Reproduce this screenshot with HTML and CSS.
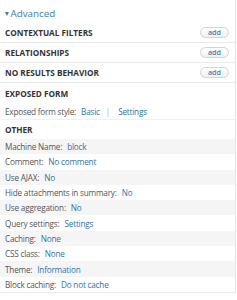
FILE: index.html
```html
<!DOCTYPE html>
<html>
<head>
<meta charset="utf-8">
<link rel="stylesheet" href="styles.css">
</head>
<body>
<div class="panel">
  <div class="toggle"><span class="tri"></span>Advanced</div>
  <div class="head bordered"><span>CONTEXTUAL FILTERS</span><span class="add">add</span></div>
  <div class="head bordered"><span>RELATIONSHIPS</span><span class="add">add</span></div>
  <div class="head bordered"><span>NO RESULTS BEHAVIOR</span><span class="add">add</span></div>
  <div class="head"><span>EXPOSED FORM</span></div>
  <div class="row plain">Exposed form style:<a class="lnk">Basic</a><span class="sep">|</span><a class="lnk">Settings</a></div>
  <div class="head other"><span>OTHER</span></div>
  <ul class="list">
    <li>Machine Name:<a class="lnk">block</a></li>
    <li>Comment:<a class="lnk">No comment</a></li>
    <li>Use AJAX:<a class="lnk">No</a></li>
    <li>Hide attachments in summary:<a class="lnk">No</a></li>
    <li>Use aggregation:<a class="lnk">No</a></li>
    <li>Query settings:<a class="lnk">Settings</a></li>
    <li>Caching:<a class="lnk">None</a></li>
    <li>CSS class:<a class="lnk">None</a></li>
    <li>Theme:<a class="lnk">Information</a></li>
    <li>Block caching:<a class="lnk">Do not cache</a></li>
  </ul>
</div>
</body>
</html>
```
FILE: styles.css
```css
html, body {
  margin: 0;
  padding: 0;
  background: #ffffff;
}
body {
  font-family: "Open Sans", "DejaVu Sans", sans-serif;
  color: #555;
}
.panel {
  width: 235px;
  border-right: 1px solid #e6e6e6;
}
.toggle {
  height: 23px;
  display: flex;
  align-items: center;
  padding-left: 5px;
  padding-top: 4px;
  box-sizing: border-box;
  font-size: 9.8px;
  color: #3a80b4;
}
.tri {
  width: 0;
  height: 0;
  border-left: 2.5px solid transparent;
  border-right: 2.5px solid transparent;
  border-top: 4px solid #3a80b4;
  margin-right: 1.5px;
}
.head {
  height: 20px;
  box-sizing: border-box;
  display: flex;
  align-items: center;
  justify-content: space-between;
  padding: 0 6px 0 5px;
  font-size: 8.2px;
  font-weight: 700;
  color: #333;
}
.head.bordered {
  border-bottom: 1px solid #ebebeb;
}
.head.other {
  height: 19px;
}
.add {
  width: 27px;
  height: 9px;
  border: 1px solid #d4d4d4;
  border-radius: 6px;
  background: linear-gradient(#ffffff, #f1f1f1);
  color: #4a7fa8;
  font-size: 7.2px;
  font-weight: 600;
  display: flex;
  align-items: center;
  justify-content: center;
  margin-top: -1px;
}
.row.plain {
  height: 16px;
  display: flex;
  align-items: center;
  padding-left: 5px;
  font-size: 8.2px;
  letter-spacing: -0.2px;
  border-bottom: 1px solid #f0f0f0;
}
.lnk {
  color: #2f74aa;
  margin-left: 5px;
}
.sep {
  color: #aaa;
  margin-left: 6px;
  margin-right: 3px;
}
.list {
  list-style: none;
  margin: 0;
  padding: 0;
  border-bottom: 1px solid #ececec;
}
.list li {
  height: 15.3px;
  display: flex;
  align-items: center;
  padding-left: 5px;
  font-size: 8.2px;
  letter-spacing: -0.2px;
  color: #555;
  background: #ffffff;
}
.list li:nth-child(odd) {
  background: #f5f5f5;
}
```
